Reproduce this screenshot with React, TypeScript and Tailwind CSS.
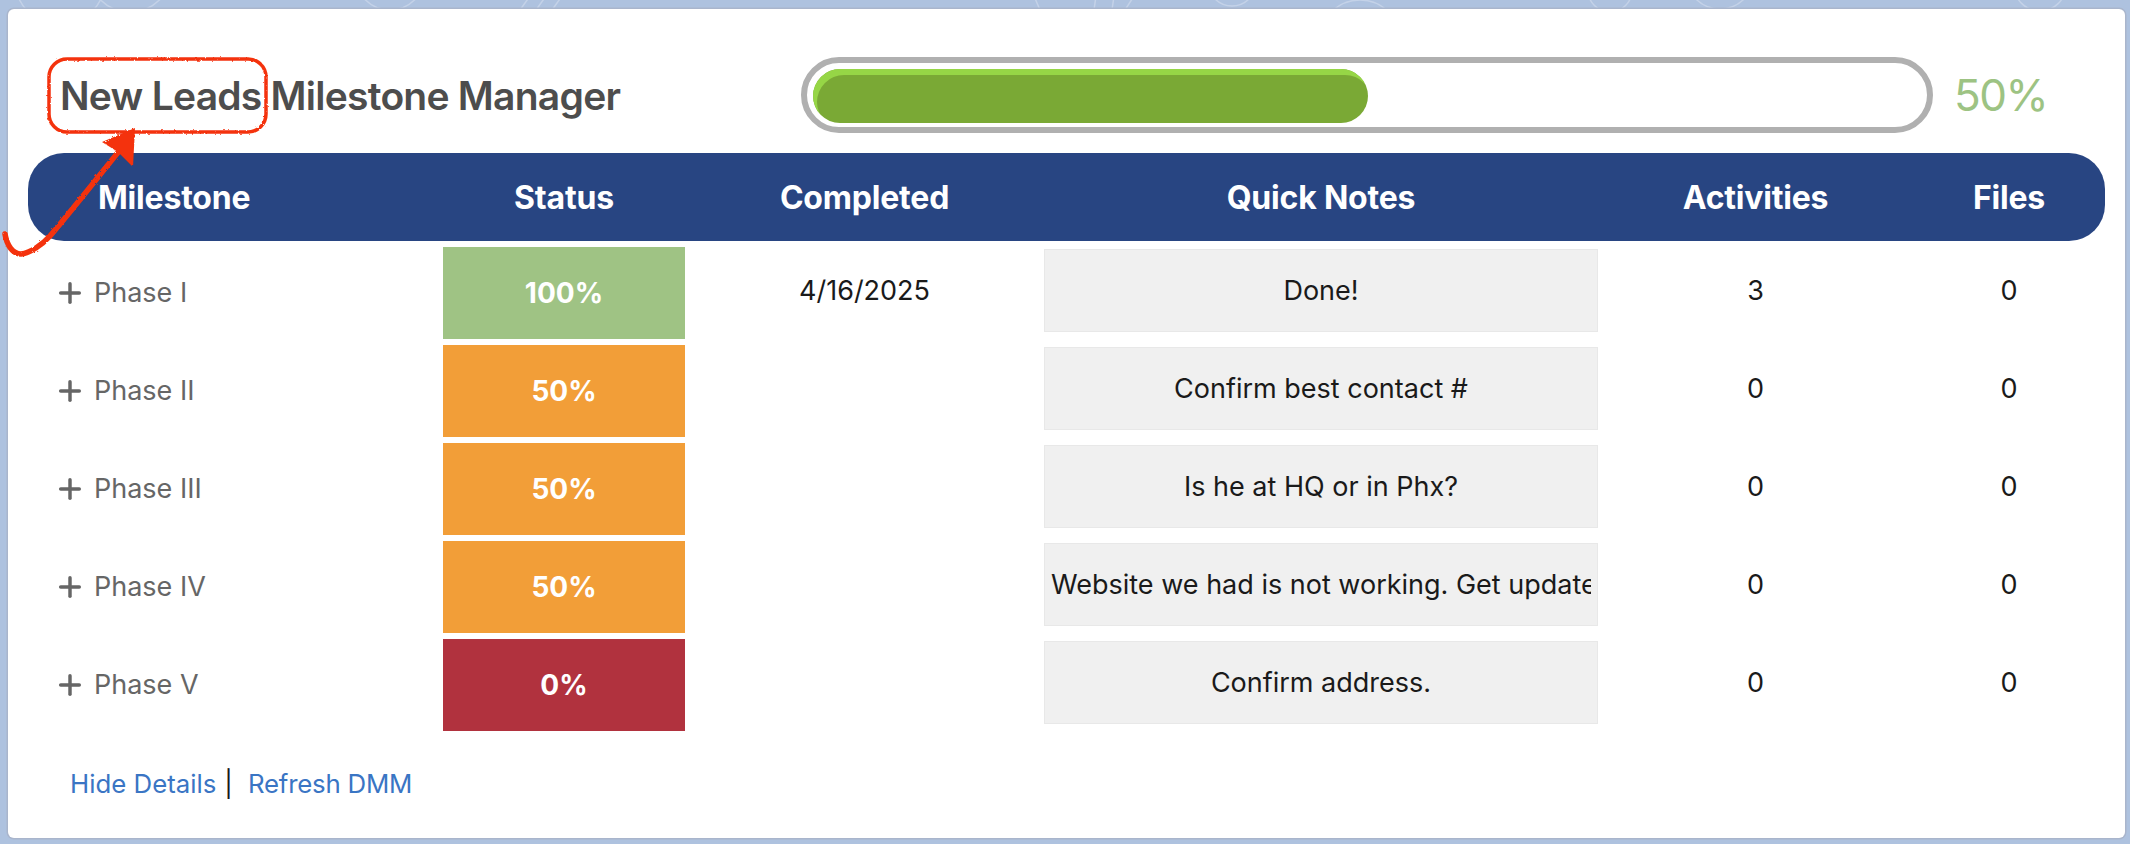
import { Plus } from "lucide-react";

const GRID = "grid grid-cols-[415px_242px_359px_554px_315px_192px]";

const rows = [
  { name: "Phase I", pct: "100%", color: "bg-[#9fc384]", date: "4/16/2025", note: "Done!", activities: 3, files: 0 },
  { name: "Phase II", pct: "50%", color: "bg-[#f29e38]", date: "", note: "Confirm best contact #", activities: 0, files: 0 },
  { name: "Phase III", pct: "50%", color: "bg-[#f29e38]", date: "", note: "Is he at HQ or in Phx?", activities: 0, files: 0 },
  { name: "Phase IV", pct: "50%", color: "bg-[#f29e38]", date: "", note: "Website we had is not working. Get updated website", activities: 0, files: 0 },
  { name: "Phase V", pct: "0%", color: "bg-[#b1323e]", date: "", note: "Confirm address.", activities: 0, files: 0 },
];

// faint swirl of the page wallpaper, only the top strip really shows
function Wallpaper() {
  return (
    <svg className="absolute inset-0" width="2130" height="844" fill="none" stroke="#c4d2e8" strokeWidth="1.5">
      <circle cx="60" cy="-20" r="45" />
      <circle cx="130" cy="-30" r="42" />
      <circle cx="390" cy="-25" r="35" />
      <circle cx="1232" cy="-18" r="24" />
      <circle cx="1360" cy="40" r="40" />
      <circle cx="1610" cy="-10" r="22" />
      <circle cx="1720" cy="-25" r="34" />
      <circle cx="2040" cy="-15" r="26" />
      <path d="M520 10 L530 -4 M536 10 L546 -4 M552 10 L562 -4 M1040 10 L1034 -4 M1094 10 L1096 -4 M1112 10 L1114 -4 M1125 10 L1134 -4" />
    </svg>
  );
}

function Scribble() {
  return (
    <svg className="pointer-events-none absolute left-0 top-0" width="300" height="280" viewBox="0 0 300 280" fill="none">
      <defs>
        <filter id="rough" x="-5%" y="-5%" width="110%" height="110%">
          <feTurbulence type="fractalNoise" baseFrequency="0.35" numOctaves="2" seed="3" />
          <feDisplacementMap in="SourceGraphic" scale="2.5" />
        </filter>
      </defs>
      <g filter="url(#rough)">
        <rect x="49" y="59" width="217" height="73" rx="18" stroke="#f4330a" strokeWidth="3.5" />
        <path d="M5 234 C7 246 13 254 21 254 C30 253 42 245 50 236 C72 210 94 182 120 150" stroke="#f4330a" strokeWidth="5.5" strokeLinecap="round" />
        <path d="M135 128 L102 142 L118 152 L133 167 Z" fill="#f4330a" />
      </g>
    </svg>
  );
}

export default function App() {
  return (
    <div className="relative h-[844px] w-[2130px] overflow-hidden bg-[#aec2df] font-['Inter',sans-serif]">
      <Wallpaper />
      <div className="relative h-full pb-[6px] pl-[8px] pr-[5px] pt-[9px]">
        <div className="h-full rounded-[6px] bg-white px-[20px] shadow-[0_0_0_1.5px_#a9b5cc]">
          <div className="flex h-[144px] items-center pt-[28px]">
            <h1 className="w-[773px] pl-[32px] pt-[2px] text-[39px] font-semibold tracking-[-0.75px] text-[#4d4d4d]">
              New Leads Milestone Manager
            </h1>
            <div className="h-[76px] w-[1132px] rounded-full border-[6px] border-[#b0b0b0] px-[6px] pb-[4px] pt-[6px]">
              <div className="h-[54px] w-[555px] rounded-full bg-[#7aa935] shadow-[inset_4px_6px_0_#96d646]" />
            </div>
            <div className="pl-[21px] text-[44px] leading-none tracking-[-1.5px] text-[#9dc383]">50%</div>
          </div>

          <div className={`${GRID} h-[88px] items-center rounded-[36px] bg-[#284582] pt-[2px] text-[32px] font-bold tracking-[-0.2px] text-white`}>
            <div className="pl-[70px]">Milestone</div>
            <div className="text-center">Status</div>
            <div className="text-center">Completed</div>
            <div className="text-center">Quick Notes</div>
            <div className="text-center">Activities</div>
            <div className="text-center">Files</div>
          </div>

          <div className="flex flex-col gap-[6px] pt-[6px]">
            {rows.map((row) => (
              <div key={row.name} className={`${GRID} h-[92px] items-center text-[27px] text-[#1a1a1a]`}>
                <div className="flex items-center gap-[8px] pl-[26px] text-[#666666]">
                  <Plus size={32} strokeWidth={2.6} />
                  <span>{row.name}</span>
                </div>
                <div className={`flex h-[92px] items-center justify-center text-[28px] font-bold text-white ${row.color}`}>{row.pct}</div>
                <div className="pb-[3px] text-center">{row.date}</div>
                <div className="mb-[5px] h-[83px] border border-[#e8e8e8] bg-[#f0f0f0] px-[6px] text-center leading-[81px]">
                  <div className="overflow-hidden whitespace-nowrap">{row.note}</div>
                </div>
                <div className="pb-[3px] text-center">{row.activities}</div>
                <div className="pb-[3px] text-center">{row.files}</div>
              </div>
            ))}
          </div>

          <div className="flex items-center pl-[42px] pt-[35px] text-[25.8px] leading-[36px]">
            <a className="text-[#3a75c4]">Hide Details</a>
            <span className="pl-[8px] text-[#1a1a1a]">|</span>
            <a className="pl-[15px] tracking-[-0.2px] text-[#3a75c4]">Refresh DMM</a>
          </div>
        </div>
      </div>
      <Scribble />
    </div>
  );
}
